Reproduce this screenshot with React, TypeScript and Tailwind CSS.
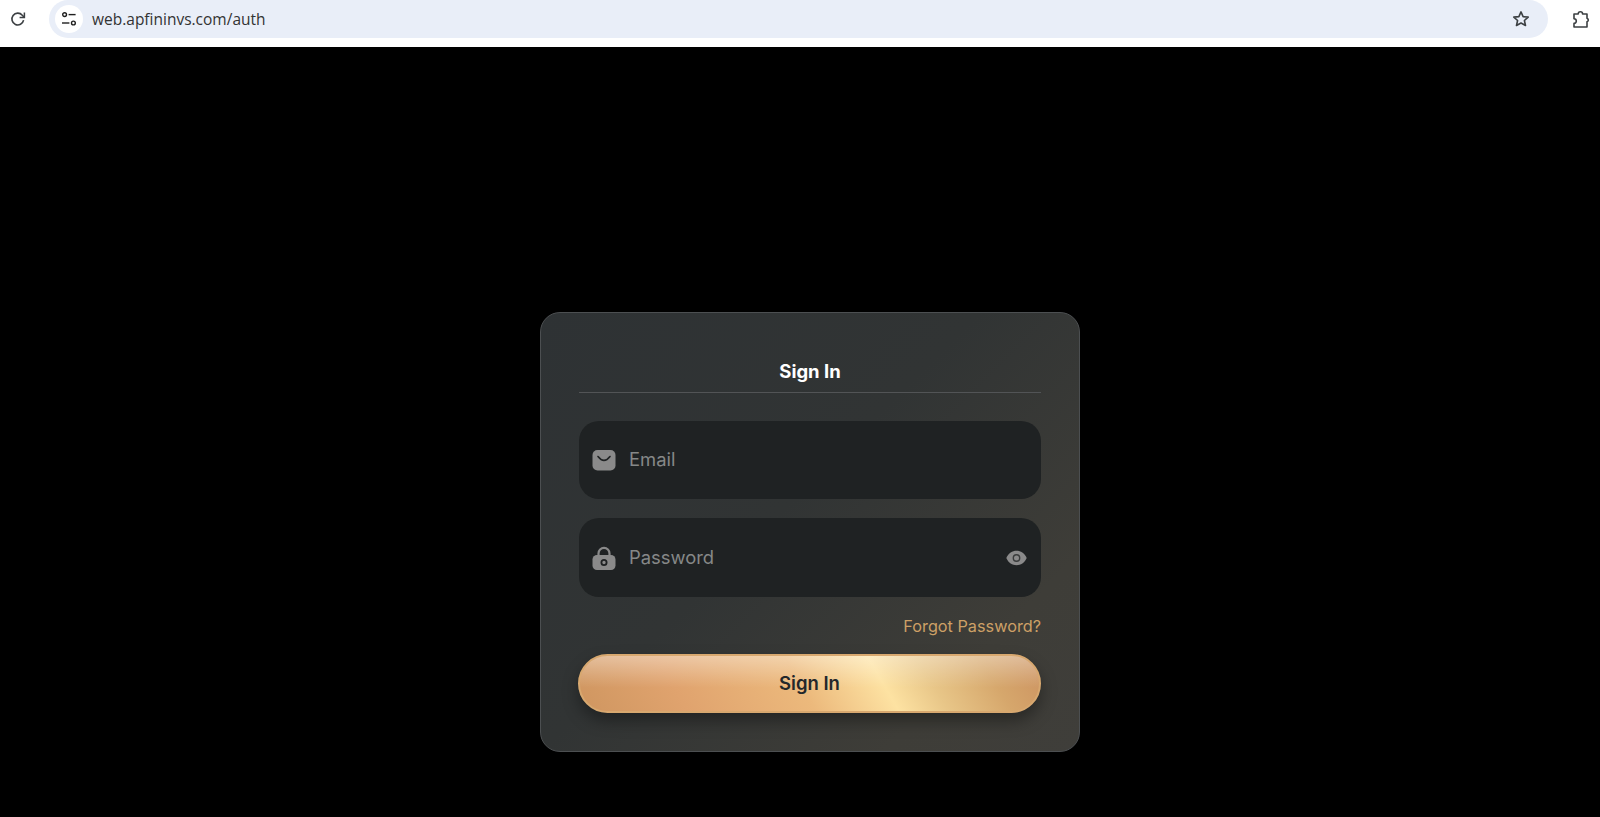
import React from "react";

const ReloadIcon = () => (
  <svg width="18" height="18" viewBox="0 0 18 18" fill="none" stroke="#3c4043" strokeWidth="1.6">
    <path d="M14.6 10.2a5.9 5.9 0 1 1-1.3-5L15 7" />
    <path d="M15.4 2.6v4.8h-4.8" strokeWidth="1.5" />
  </svg>
);

const TuneIcon = () => (
  <svg width="16" height="16" viewBox="0 0 16 16" fill="none" stroke="#1f1f1f" strokeWidth="1.4">
    <circle cx="3.6" cy="3.6" r="1.9" />
    <path d="M7.6 3.6h7" />
    <circle cx="12.4" cy="12" r="1.9" />
    <path d="M1 12h7.4" />
  </svg>
);

const StarIcon = () => (
  <svg width="18" height="18" viewBox="0 0 18 18" fill="none" stroke="#3c4043" strokeWidth="1.6" strokeLinejoin="round">
    <path d="M9 1.9l2.1 4.7 5.1.5-3.8 3.4 1.1 5L9 13l-4.5 2.5 1.1-5-3.8-3.4 5.1-.5z" />
  </svg>
);

const ExtensionIcon = () => (
  <svg width="20" height="20" viewBox="0 0 20 20" fill="none" stroke="#3c4043" strokeWidth="1.6" strokeLinejoin="round">
    <path d="M2 5h4.2a2.2 2.2 0 0 1 4.4 0H15v4.2a1.9 1.9 0 0 1 0 3.6V18H2v-3.6a2.2 2.2 0 0 0 0-4.6z" />
  </svg>
);

const MailIcon = () => (
  <svg width="24" height="22" viewBox="0 0 24 22">
    <rect x="0.5" y="1" width="23" height="20.5" rx="5" fill="#8a8a8a" />
    <path d="M6 7.5c2 2.6 4 3.9 6 3.9s4-1.3 6-3.9" fill="none" stroke="#1f2223" strokeWidth="1.6" strokeLinecap="round" />
  </svg>
);

const LockIcon = () => (
  <svg width="24" height="24" viewBox="0 0 24 24">
    <path d="M6.5 10V7.4a5.5 5.5 0 0 1 11 0V10" fill="none" stroke="#8a8a8a" strokeWidth="2.2" />
    <rect x="0.5" y="9" width="23" height="15" rx="4.5" fill="#8a8a8a" />
    <circle cx="12" cy="16.5" r="2.6" fill="none" stroke="#1f2223" strokeWidth="1.8" />
  </svg>
);

const EyeIcon = () => (
  <svg width="21" height="18" viewBox="0 0 21 18">
    <path d="M0.3 9C2.6 4 6.2 1.8 10.5 1.8S18.4 4 20.7 9c-2.3 5-5.9 7.2-10.2 7.2S2.6 14 .3 9z" fill="#8a8a8a" />
    <circle cx="10.5" cy="9" r="3.2" fill="none" stroke="#3a3c3c" strokeWidth="1.4" />
  </svg>
);

const BrowserBar = () => (
  <div className="flex h-[47px] items-start bg-white">
    <div className="flex h-[38px] w-[49px] items-center pl-[9px]">
      <ReloadIcon />
    </div>
    <div className="flex h-[38px] w-[1499px] items-center rounded-[20px] bg-[#e9eef8] pl-[6px] pr-[18px]">
      <div className="flex h-[28px] w-[28px] items-center justify-center rounded-full bg-white">
        <TuneIcon />
      </div>
      <span className="ml-[9px] flex-1 pt-[1px] font-['Open_Sans',sans-serif] text-[15.5px] text-[#333333]">
        web.apfininvs.com/auth
      </span>
      <StarIcon />
    </div>
    <div className="flex h-[38px] flex-1 items-center justify-end pr-[8px]">
      <ExtensionIcon />
    </div>
  </div>
);

const Field = ({
  icon,
  placeholder,
  trailing,
  className,
}: {
  icon: React.ReactNode;
  placeholder: string;
  trailing?: React.ReactNode;
  className: string;
}) => (
  <div className={`flex items-center rounded-[20px] bg-[#1f2223] pl-[13px] pr-[14px] ${className}`}>
    <div className="flex w-[24px] justify-center">{icon}</div>
    <span className="ml-[13px] flex-1 text-[18.4px] text-[#868888]">{placeholder}</span>
    {trailing}
  </div>
);

const App = () => {
  return (
    <div className="flex min-h-[817px] flex-col bg-black font-['Inter',sans-serif]">
      <BrowserBar />
      <div className="flex justify-center pl-[20px] pt-[265px]">
        <div className="flex h-[440px] w-[540px] flex-col rounded-[20px] border border-[#4c4f51] bg-[linear-gradient(135deg,#2e3234_0%,#313434_45%,#3e3d38_80%,#3f3e3a_100%)] px-[38px] pt-[47px]">
          <h1 className="h-[33px] border-b border-[#525456] text-center text-[18.5px] font-bold leading-[22px] text-white">
            Sign In
          </h1>
          <div className="mt-[28px] flex flex-col gap-[19px]">
            <Field className="h-[78px]" icon={<MailIcon />} placeholder="Email" />
            <Field className="h-[79px]" icon={<LockIcon />} placeholder="Password" trailing={<EyeIcon />} />
          </div>
          <div className="mt-[19px] text-right text-[16.25px] leading-[20px] text-[#cda066]">Forgot Password?</div>
          <button className="relative mt-[18px] -ml-[1px] h-[59px] rounded-full border-2 border-[#d8a86f] bg-[linear-gradient(180deg,rgba(255,255,255,0.36)_0%,rgba(255,255,255,0.1)_40%,rgba(255,255,255,0)_58%),linear-gradient(60deg,#cf9660_0%,#e0a36e_22%,#ecb97c_48%,#fde2a2_65%,#e8c688_75%,#d6a76c_88%,#cc9260_100%)] text-[18.5px] font-semibold text-[#23272b] shadow-[0_8px_16px_rgba(0,0,0,0.35)]">
            Sign In
          </button>
        </div>
      </div>
    </div>
  );
};

export default App;
